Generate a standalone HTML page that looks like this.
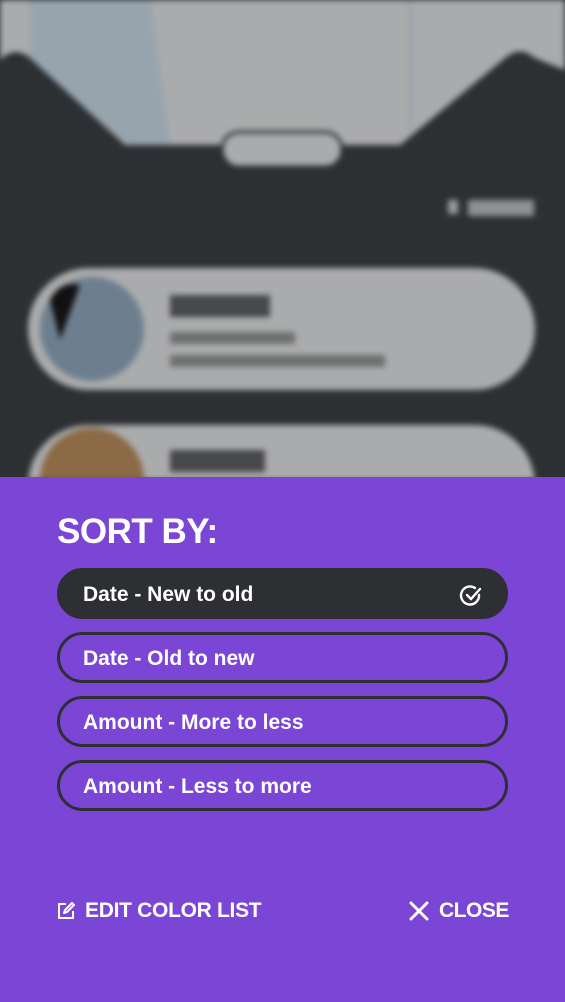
<!DOCTYPE html>
<html><head><style>
*{margin:0;padding:0;box-sizing:border-box}
body{width:565px;height:1002px;overflow:hidden;background:#2d3033;font-family:"Liberation Sans",sans-serif;position:relative}
.bg{position:absolute;left:0;top:0;width:565px;height:480px;filter:blur(3px);overflow:hidden;background:#2d3033}
.sheet{position:absolute;left:0;top:477px;width:565px;height:525px;background:#7b46d5;color:#fff}
h1{position:absolute;left:57px;top:512px;font-size:35px;font-weight:bold;color:#fff;letter-spacing:-0.5px}
.opt{position:absolute;left:57px;width:451px;height:51px;border:3px solid #2d2f33;border-radius:26px;font-size:21px;font-weight:bold;color:#fff;padding-left:23px;line-height:48px}
.sel{background:#2d2f33}
.foot{position:absolute;top:899px;font-size:21px;font-weight:bold;color:#fff;display:flex;align-items:center;gap:10px}
</style></head><body>
<div class="bg">
 <svg width="565" height="480" viewBox="0 0 565 480">
  <rect width="565" height="480" fill="#2d3033"/>
  <rect x="0" y="0" width="565" height="150" fill="#aaabac"/>
  <polygon points="30,0 150,0 170,145 120,145 30,60" fill="#97a4ae"/>
  <rect x="408" y="0" width="4" height="130" fill="#9aa3b0"/>
  <path d="M0,60 Q15,45 30,58 L125,145 L400,145 L505,58 Q520,45 535,58 L565,70 L565,480 L0,480Z" fill="#2d3033"/>
  <rect x="222" y="132" width="120" height="35" rx="17" fill="#aaabac" stroke="#2d3033" stroke-width="3"/>
  <rect x="448" y="200" width="10" height="14" fill="#9a9b9c"/>
  <rect x="468" y="200" width="66" height="16" fill="#8f9091"/>
  <rect x="28" y="268" width="507" height="122" rx="61" fill="#aaabac"/>
  <circle cx="92" cy="329" r="52" fill="#6d7f8f"/>
  <path d="M50,300 Q60,280 80,285 L60,340Z" fill="#111"/>
  <rect x="170" y="295" width="100" height="22" fill="#2d3033" opacity=".8"/>
  <rect x="170" y="332" width="125" height="12" fill="#6f7071"/>
  <rect x="170" y="355" width="215" height="12" fill="#6f7071"/>
  <rect x="28" y="425" width="507" height="120" rx="60" fill="#aaabac"/>
  <circle cx="92" cy="480" r="52" fill="#8b6a45"/>
  <rect x="170" y="450" width="95" height="22" fill="#2d3033" opacity=".8"/>
 </svg>
</div>
<div class="sheet"></div>
<h1>SORT BY:</h1>
<div class="opt sel" style="top:568px">Date - New to old
 <svg style="position:absolute;right:22px;top:13px" width="24" height="24" viewBox="0 0 24 24" fill="none" stroke="#fff" stroke-width="2.4" stroke-linecap="round"><path d="M20 11a9 9 0 1 1-4-7"/><path d="M8 11l4 4 9-10"/></svg></div>
<div class="opt" style="top:632px">Date - Old to new</div>
<div class="opt" style="top:696px">Amount - More to less</div>
<div class="opt" style="top:760px">Amount - Less to more</div>
<div class="foot" style="left:57px"><svg width="18" height="18" viewBox="0 0 18 18" fill="none" stroke="#fff" stroke-width="2" stroke-linejoin="round"><path d="M9 2H2v14h14V9"/><path d="M7 11l1-3 7-7 2 2-7 7z"/></svg><span style="letter-spacing:-0.3px">EDIT COLOR LIST</span></div>
<div class="foot" style="left:409px"><svg width="20" height="20" viewBox="0 0 20 20" stroke="#fff" stroke-width="3" stroke-linecap="round"><path d="M2 2l16 16M18 2L2 18"/></svg><span style="letter-spacing:-0.5px">CLOSE</span></div>
</body></html>
